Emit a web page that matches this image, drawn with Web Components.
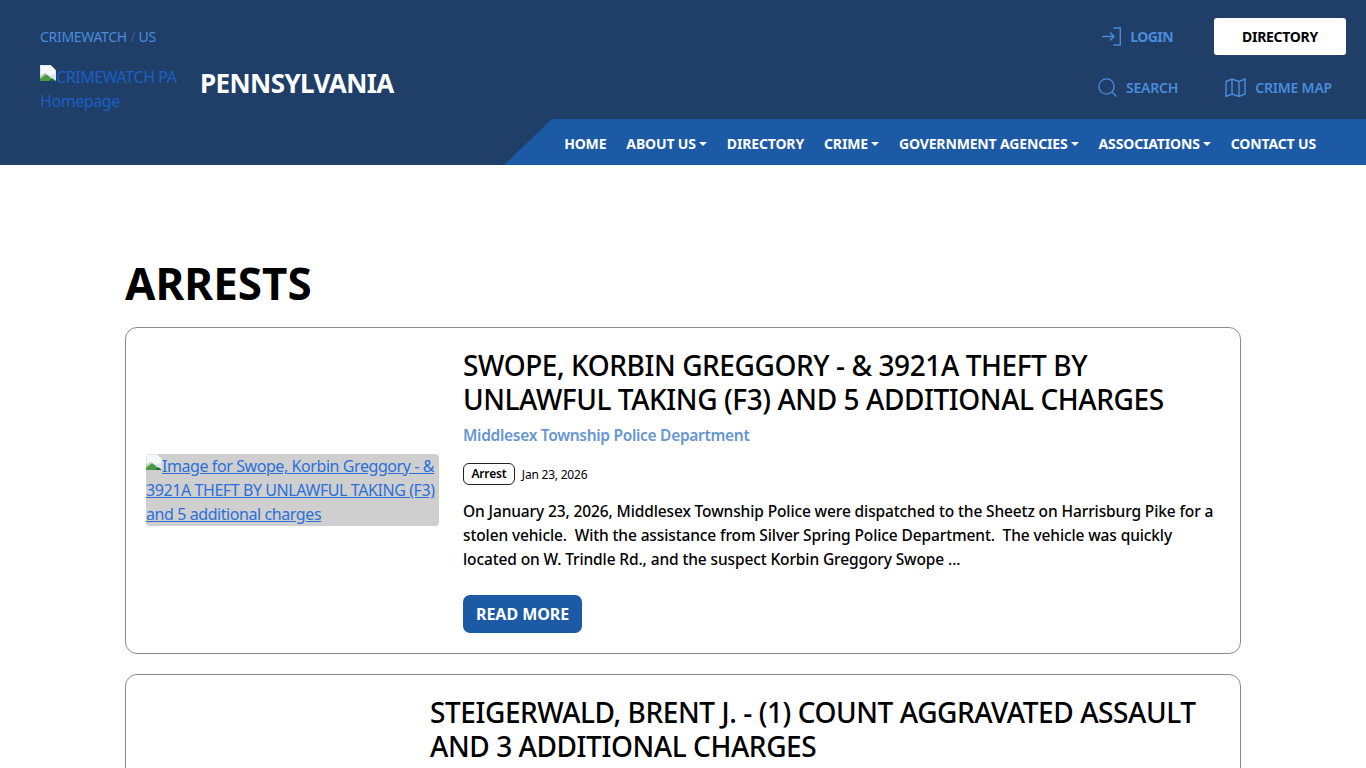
<!DOCTYPE html>
<html lang="en"><head><meta charset="utf-8"><title>Arrests</title>
<style>
html,body{margin:0;padding:0;height:768px;overflow:hidden;background:#fff}
body{font-family:"Noto Sans","Open Sans",sans-serif;color:#000}
</style></head><body>
<cw-header></cw-header>
<cw-main>
<h1 slot="title" style="margin:0;font:700 44px/53px 'Noto Sans',sans-serif">ARRESTS</h1>
<cw-card imgw="293" imgh="72" alt="Image for Swope, Korbin Greggory - &amp; 3921A THEFT BY UNLAWFUL TAKING (F3) and 5 additional charges" title-text="SWOPE, KORBIN GREGGORY - &amp; 3921A THEFT BY UNLAWFUL TAKING (F3) AND 5 ADDITIONAL CHARGES" dept="Middlesex Township Police Department" date="Jan 23, 2026">On January 23, 2026, Middlesex Township Police were dispatched to the Sheetz on Harrisburg Pike for a stolen vehicle.&nbsp; With the assistance from Silver Spring Police Department.&nbsp; The vehicle was quickly located on W. Trindle Rd., and the suspect Korbin Greggory Swope ...</cw-card>
<cw-card imgw="260" title-text="STEIGERWALD, BRENT J. - (1) COUNT AGGRAVATED ASSAULT AND 3 ADDITIONAL CHARGES"></cw-card>
</cw-main>
<script>
const brokenIcon=`<svg width="16" height="16" viewBox="0 0 16 16" style="display:inline-block;vertical-align:2px"><path d="M0 0h10.5l5.5 5.5V16H0z" fill="#dfe6ee"/><path d="M10.5 0v5.5H16z" fill="#fff"/><path d="M1 1h9v5h5v3L1 12z" fill="#f6f8fa"/><path d="M0 16v-2.5L6 9l4 3 3 4z" fill="#4c9a45"/><path d="M0 13.5L6 9l-1-1.5L0 11z" fill="#b9d6ae"/><path d="M9 16l3-3 4 3z" fill="#1f6d33"/></svg>`;
const esc=s=>s.replace(/&/g,"&amp;");
class CwHeader extends HTMLElement{constructor(){super();this.attachShadow({mode:"open"}).innerHTML=`
<style>
:host{display:block;height:165px;background:#1f3f68;font-family:"Noto Sans","Open Sans",sans-serif;position:relative}
a{text-decoration:none;color:inherit}
.wrap{display:flex;justify-content:space-between;height:119px;padding:0 20px 0 40px}
.left{width:500px}
.crumb{padding-top:28px;height:37px;font-size:14px;line-height:18px;color:#4a8cdc;letter-spacing:-.3px}
.crumb i{font-style:normal;color:#3b5f8d}
.brand{display:flex;align-items:flex-start}
.logo{display:block;flex:none;width:160px;font-size:16px;line-height:24px;color:#1c5fc4;letter-spacing:-.42px;white-space:nowrap}
.state{font-size:26px;font-weight:700;color:#fff;line-height:36px;margin-top:0;letter-spacing:-.58px}
.right{display:flex;flex-direction:column;align-items:flex-end}
.r1{display:flex;align-items:center;margin-top:18px;height:37px}
.login{display:flex;align-items:center;color:#4a8cdc;font-weight:700;font-size:14px;gap:8px;margin-right:41px;letter-spacing:-.55px}
.dir{display:flex;width:132px;height:37px;align-items:center;justify-content:center;background:#fff;color:#000;font-weight:700;font-size:14px;border-radius:3px;letter-spacing:-.3px}
.r2{display:flex;align-items:center;margin-top:13px;height:38px;color:#4a8cdc;font-size:14px;font-weight:600;letter-spacing:-.2px;padding-right:14px}
.r2 a{display:flex;align-items:center}
.search{gap:9px;margin-right:47px}.map{gap:9px}
.r2 svg,.r1 svg{display:block}
nav{position:absolute;left:504px;right:0;top:119px;height:46px;padding-top:2px;background:#1c5aa6;clip-path:polygon(48px 0,100% 0,100% 100%,0 100%);display:flex;align-items:center;justify-content:flex-end;padding-right:50px;box-sizing:border-box;gap:20px;color:#fff;font-weight:700;font-size:14px;letter-spacing:-.15px;white-space:nowrap}
nav a.d::after{content:"";display:inline-block;border:4px solid transparent;border-top-color:#fff;border-bottom:0;margin-left:3px;vertical-align:3px}
</style>
<div class="wrap">
<div class="left">
<div class="crumb"><a href="#">CRIMEWATCH</a> <i>/</i> <a href="#">US</a></div>
<div class="brand"><a class="logo" href="#">${brokenIcon}CRIMEWATCH PA<br>Homepage</a><div class="state">PENNSYLVANIA</div></div>
</div>
<div class="right">
<div class="r1"><a class="login" href="#"><svg width="21" height="19" viewBox="0 0 21 19" fill="none" stroke="#4a8cdc" stroke-width="1.4"><path d="M12.5 1h6.800v17h-6.800M1 9.500h12M9 5.500l4 4-4 4"/></svg>LOGIN</a><a class="dir" href="#">DIRECTORY</a></div>
<div class="r2"><a class="search" href="#"><svg width="19" height="19" viewBox="0 0 19 19" fill="none" stroke="#4a8cdc" stroke-width="1.3"><circle cx="8.5" cy="8.5" r="7.6"/><path d="M14 14l4.500 4.500"/></svg>SEARCH</a><a class="map" href="#"><svg width="21" height="19" viewBox="0 0 21 19" fill="none" stroke="#4a8cdc" stroke-width="1.4"><path d="M1 3.500l6-2.500 7 2.500L20 1v15l-6 2.500-7-2.500-6 2.500zM7 1v15M14 3.500v15"/></svg>CRIME MAP</a></div>
</div>
</div>
<nav><a href="#">HOME</a><a class="d" href="#">ABOUT US</a><a href="#">DIRECTORY</a><a class="d" href="#">CRIME</a><a class="d" href="#">GOVERNMENT AGENCIES</a><a class="d" href="#">ASSOCIATIONS</a><a href="#">CONTACT US</a></nav>`}}
customElements.define("cw-header",CwHeader);
class CwMain extends HTMLElement{constructor(){super();this.attachShadow({mode:"open"}).innerHTML=`
<style>:host{display:block;padding:92px 125px 0}.t{margin-bottom:17px}.c{display:flex;flex-direction:column;gap:20px}</style>
<div class="t"><slot name="title"></slot></div><div class="c"><slot></slot></div>`}}
customElements.define("cw-main",CwMain);
class CwCard extends HTMLElement{constructor(){super();const a=n=>this.getAttribute(n);const full=this.hasAttribute("dept");this.attachShadow({mode:"open"}).innerHTML=`
<style>
:host{display:flex;align-items:center;box-sizing:border-box;border:1px solid #8a8a8a;border-radius:12px;padding:20px 25px 20px 20px;gap:24px;font-family:"Noto Sans","Open Sans",sans-serif;background:#fff}
:host(:not([dept])){align-items:flex-start;min-height:300px;gap:24px}
.img{flex:none;display:block;width:${a("imgw")}px;height:${a("imgh")||72}px;margin-top:-1px;background:#cfcfcf;border-radius:4px;font-size:16px;line-height:24px;color:#2a6fdb;overflow:hidden;letter-spacing:-.42px}
.spacer{flex:none;width:${a("imgw")}px}
.b{flex:1;min-width:0}
h2{margin:1px 0 0;font-size:28px;line-height:33.6px;font-weight:500;letter-spacing:-.42px}
.dept{display:block;margin-top:7px;font-size:15.5px;line-height:24px;font-weight:600;color:#6596d2;text-decoration:none;letter-spacing:-.3px}
.meta{display:flex;align-items:center;margin-top:16px;gap:7px;font-size:12px}
.tag{display:block;box-sizing:border-box;height:22px;line-height:20px;padding:0 7.5px;border:1px solid #222;border-radius:6px;font-weight:600;letter-spacing:-.2px}
.date{letter-spacing:-.22px}
p{margin:14px 0 0;font-size:15.5px;line-height:24px;font-weight:500;letter-spacing:-.12px}
.btn{display:inline-block;margin-top:24px;height:38px;line-height:38px;padding:0 13px;background:#1c5aa6;color:#fff;font-weight:700;font-size:16px;border-radius:7px;text-decoration:none;letter-spacing:-.05px}
</style>
${full?`<a class="img" href="#">${brokenIcon}<u>${esc(a("alt"))}</u></a>`:`<div class="spacer"></div>`}
<div class="b"><h2>${esc(a("title-text"))}</h2>${full?`<a class="dept" href="#">${a("dept")}</a>
<div class="meta"><span class="tag">Arrest</span><span class="date">${a("date")}</span></div>
<p><slot></slot></p><a class="btn" href="#">READ MORE</a>`:""}</div>`}}
customElements.define("cw-card",CwCard);
</script>
</body></html>
